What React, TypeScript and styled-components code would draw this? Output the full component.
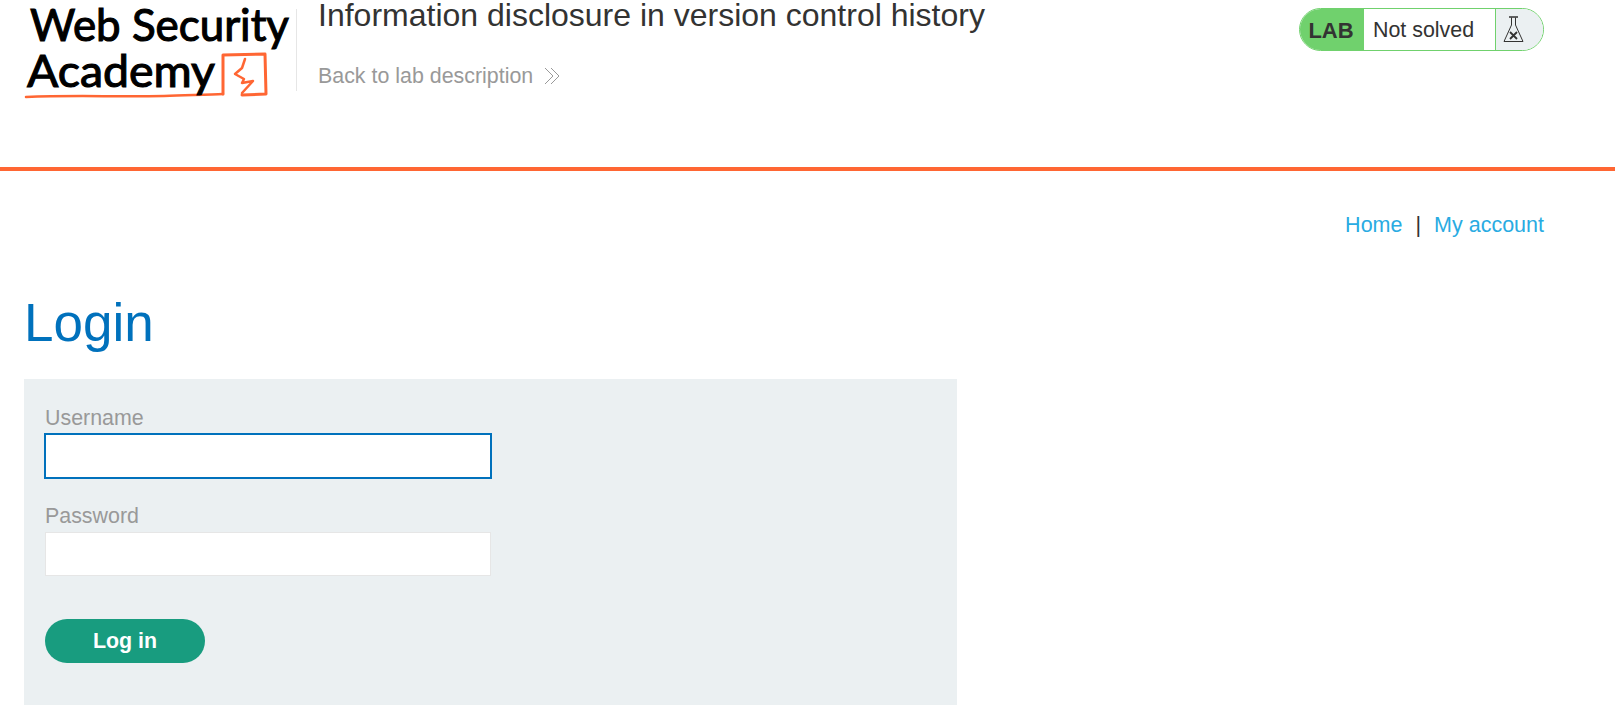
import React from 'react'
import styled, { createGlobalStyle } from 'styled-components'

const GlobalStyle = createGlobalStyle`
  html, body {
    margin: 0;
    padding: 0;
    background: #fff;
    font-family: 'Liberation Sans', Arial, sans-serif;
    color: #333332;
  }
  * {
    box-sizing: border-box;
  }
`

const Header = styled.header`
  display: flex;
  align-items: flex-start;
  height: 171px;
  padding: 0 71px 0 24px;
  border-bottom: 4px solid #ff6633;
`

const LogoLink = styled.a`
  display: block;
  width: 272px;
  height: 104px;
  flex: none;
`

const TitleBlock = styled.div`
  flex: 1;
  height: 82px;
  margin-top: 9px;
  padding-left: 21px;
  border-left: 1px solid #e6e6e6;
`

const Title = styled.h2`
  margin: -9px 0 0;
  font-size: 32px;
  line-height: 30px;
  font-weight: 400;
  color: #333332;
`

const BackLink = styled.a`
  display: flex;
  align-items: center;
  gap: 11px;
  margin-top: 32px;
  font-size: 21.4px;
  line-height: 28px;
  color: #999999;
`

const Status = styled.div`
  display: flex;
  align-items: stretch;
  width: 245px;
  height: 43px;
  margin-top: 8px;
  border: 1px solid #70d16d;
  border-radius: 22px;
  overflow: hidden;
  flex: none;
`

const StatusTag = styled.span`
  display: flex;
  align-items: center;
  justify-content: center;
  width: 64px;
  padding: 2px 2px 0 0;
  background: #70d16d;
  font-size: 22px;
  font-weight: 700;
  color: #333332;
`

const StatusText = styled.span`
  display: flex;
  align-items: center;
  padding: 1px 0 0 9px;
  width: 132px;
  background: #fff;
  border-right: 1px solid #70d16d;
  font-size: 21.4px;
  color: #333332;
`

const StatusIcon = styled.span`
  display: flex;
  align-items: center;
  padding-left: 7px;
  flex: 1;
  background: #ebf0f2;
`

const Main = styled.main`
  padding: 0 71px 0 24px;
`

const Nav = styled.nav`
  display: flex;
  justify-content: flex-end;
  align-items: center;
  gap: 13px;
  padding-top: 40px;
  font-size: 21.5px;
  line-height: 28px;
`

const NavLink = styled.a`
  color: #29abe2;
`

const Heading = styled.h1`
  margin: 51px 0 0;
  font-size: 53px;
  line-height: 66px;
  font-weight: 400;
  color: #0071bc;
`

const FormPanel = styled.form`
  display: flex;
  flex-direction: column;
  align-items: flex-start;
  width: 933px;
  height: 326px;
  margin-top: 23px;
  padding: 25px 21px 0;
  background: #ebf0f2;
`

const Label = styled.label`
  font-size: 21.4px;
  line-height: 28px;
  color: #999999;
`

const Input = styled.input<{ $focused?: boolean }>`
  display: block;
  width: 446px;
  height: 44px;
  margin: 2px 0 ${({ $focused }) => ($focused ? '24px' : '43px')};
  background: #fff;
  border: 1px solid ${({ $focused }) => ($focused ? '#0071bc' : '#e6e6e6')};
  outline: ${({ $focused }) => ($focused ? '1px solid #0071bc' : 'none')};
`

const Button = styled.button`
  width: 160px;
  height: 44px;
  border: none;
  border-radius: 25px;
  background: #189c7f;
  color: #fff;
  font-family: inherit;
  font-size: 21.4px;
  font-weight: 700;
`

function Logo() {
  return (
    <svg width='272' height='104' viewBox='0 0 272 104'>
      <path d='M2 97 C50 95 90 97 140 96 C165 95 185 95 199 94' fill='none' stroke='#ff6633' strokeWidth='2.5' strokeLinecap='round' />
      <path d='M199 94 L199 55 L241 54 L242 94 L218 95' fill='none' stroke='#ff6633' strokeWidth='3' strokeLinejoin='round' strokeLinecap='round' />
      <path d='M221 59 L218 68 L211 74 L220 79 L218 83 L229 81 L218 93' fill='none' stroke='#ff6633' strokeWidth='2.5' strokeLinejoin='round' strokeLinecap='round' />
      <text x='6' y='41' fontFamily='Lato, sans-serif' fontSize='44' stroke='#000' strokeWidth='1.1' textLength='259' lengthAdjust='spacingAndGlyphs' fill='#000'>
        Web Security
      </text>
      <text x='3' y='87' fontFamily='Lato, sans-serif' fontSize='45' stroke='#000' strokeWidth='1.1' textLength='188' lengthAdjust='spacingAndGlyphs' fill='#000'>
        Academy
      </text>
    </svg>
  )
}

function Chevrons() {
  return (
    <svg width='17' height='18' viewBox='0 0 17 18' fill='none' stroke='#999999' strokeWidth='1'>
      <path d='M1 1 L9 9 L1 17' />
      <path d='M7 1 L15 9 L7 17' />
    </svg>
  )
}

function Flask() {
  return (
    <svg width='21' height='27' viewBox='0 0 21 27' fill='none' stroke='#333332' strokeWidth='1'>
      <path d='M6 1 H15' strokeWidth='1.6' />
      <path d='M8.5 1.5 V9 L1 25.5 H20 L12.5 9 V1.5' strokeLinejoin='round' />
      <path d='M7 16 L14 23 M14 16 L7 23' strokeWidth='1.8' />
    </svg>
  )
}

export default function App() {
  return (
    <>
      <GlobalStyle />
      <Header>
        <LogoLink>
          <Logo />
        </LogoLink>
        <TitleBlock>
          <Title>Information disclosure in version control history</Title>
          <BackLink>
            Back to lab description
            <Chevrons />
          </BackLink>
        </TitleBlock>
        <Status>
          <StatusTag>LAB</StatusTag>
          <StatusText>Not solved</StatusText>
          <StatusIcon>
            <Flask />
          </StatusIcon>
        </Status>
      </Header>
      <Main>
        <Nav>
          <NavLink>Home</NavLink>
          <span>|</span>
          <NavLink>My account</NavLink>
        </Nav>
        <Heading>Login</Heading>
        <FormPanel onSubmit={(e) => e.preventDefault()}>
          <Label>Username</Label>
          <Input $focused />
          <Label>Password</Label>
          <Input type='password' />
          <Button>Log in</Button>
        </FormPanel>
      </Main>
    </>
  )
}
